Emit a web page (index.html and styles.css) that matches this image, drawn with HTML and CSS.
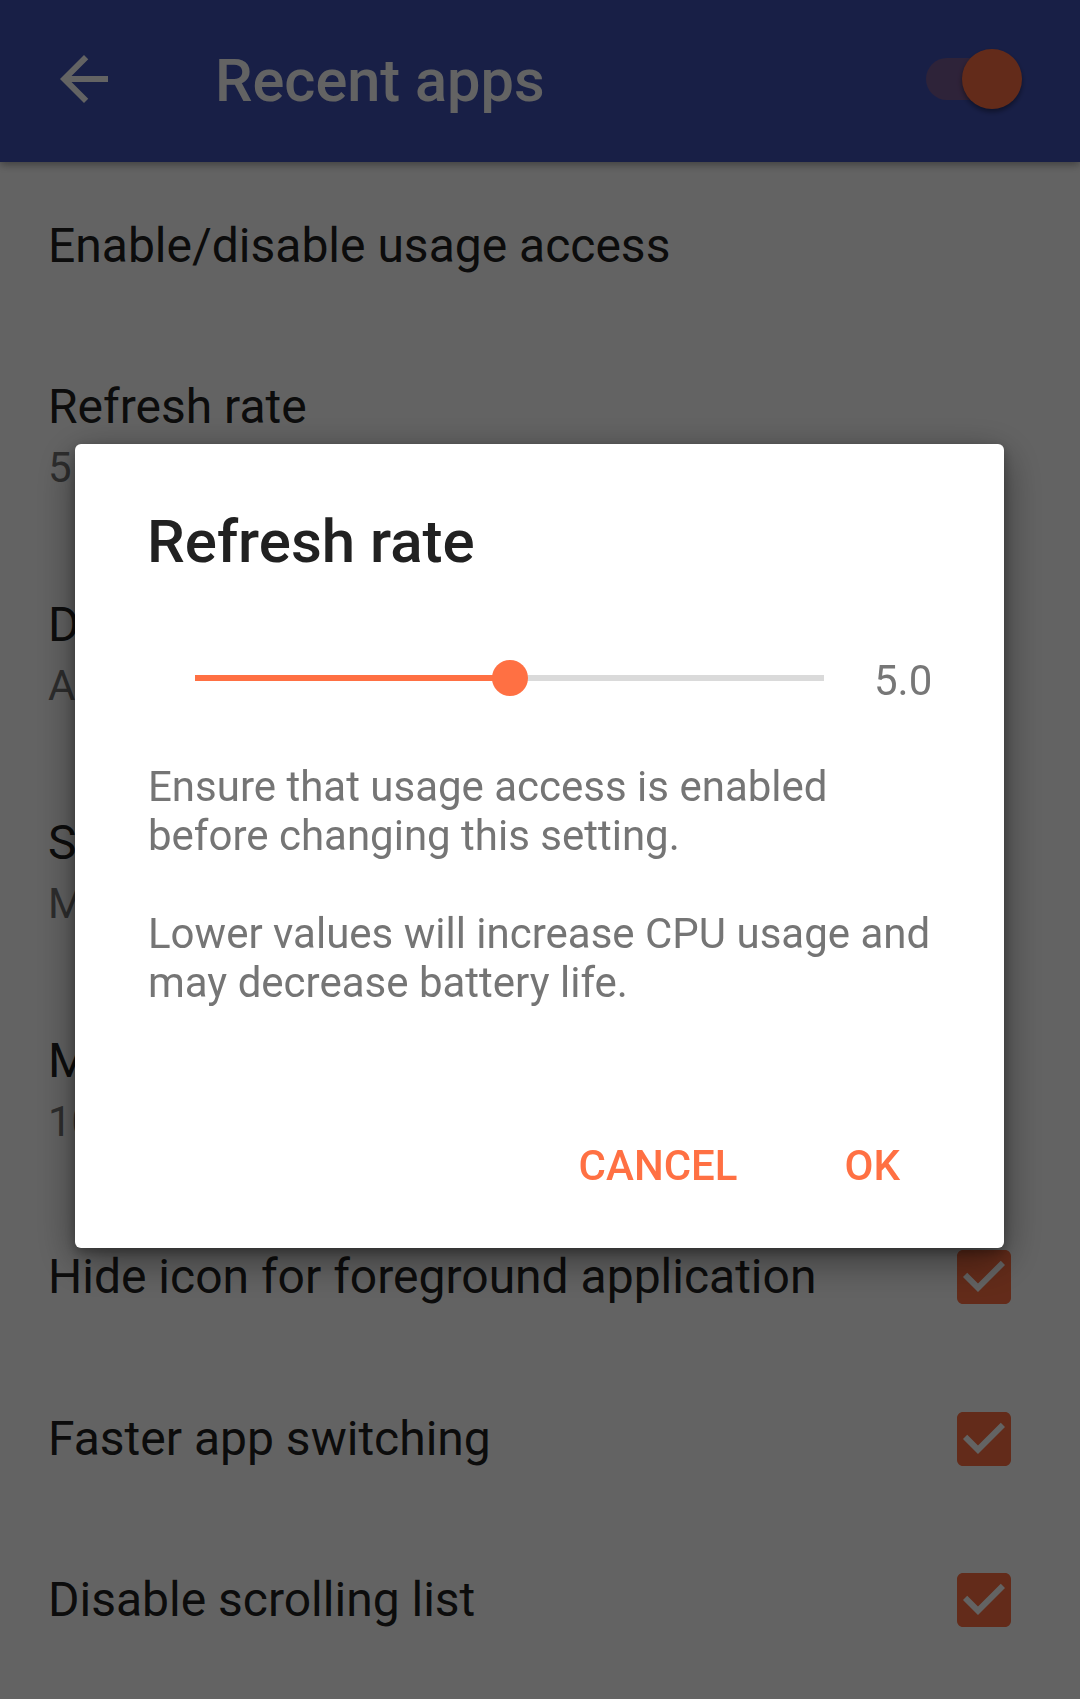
FILE: index.html
```html
<!DOCTYPE html>
<html lang="en">
<head>
<meta charset="utf-8">
<title>Recent apps</title>
<link rel="stylesheet" href="styles.css">
</head>
<body>
<div class="app">
  <header class="toolbar">
    <svg class="back" viewBox="0 0 24 24" width="72" height="72"><path d="M20 11H7.83l5.59-5.59L12 4l-8 8 8 8 1.41-1.41L7.83 13H20v-2z" fill="#ffffff"/></svg>
    <h1 class="toolbar-title">Recent apps</h1>
    <div class="switch"><span class="switch-track"></span><span class="switch-thumb"></span></div>
  </header>
  <ul class="prefs">
    <li class="pref single first"><div class="pref-text"><div class="pref-title">Enable/disable usage access</div></div></li>
    <li class="pref double"><div class="pref-text"><div class="pref-title">Refresh rate</div><div class="pref-summary">5 seconds</div></div></li>
    <li class="pref double"><div class="pref-text"><div class="pref-title">Duration</div><div class="pref-summary">App start time</div></div></li>
    <li class="pref double"><div class="pref-text"><div class="pref-title">Sort order</div><div class="pref-summary">Most recently used</div></div></li>
    <li class="pref double"><div class="pref-text"><div class="pref-title">Max number of apps</div><div class="pref-summary">10</div></div></li>
    <li class="pref single"><div class="pref-text"><div class="pref-title">Hide icon for foreground application</div></div>
      <svg class="check" viewBox="0 0 24 24" width="72" height="72"><path fill-rule="evenodd" d="M19 3H5c-1.11 0-2 .9-2 2v14c0 1.1.89 2 2 2h14c1.11 0 2-.9 2-2V5c0-1.1-.89-2-2-2zm-9 14l-5-5 1.41-1.41L10 14.17l7.59-7.59L19 8l-9 9z" fill="#ff7043"/></svg></li>
    <li class="pref single"><div class="pref-text"><div class="pref-title">Faster app switching</div></div>
      <svg class="check" viewBox="0 0 24 24" width="72" height="72"><path fill-rule="evenodd" d="M19 3H5c-1.11 0-2 .9-2 2v14c0 1.1.89 2 2 2h14c1.11 0 2-.9 2-2V5c0-1.1-.89-2-2-2zm-9 14l-5-5 1.41-1.41L10 14.17l7.59-7.59L19 8l-9 9z" fill="#ff7043"/></svg></li>
    <li class="pref single"><div class="pref-text"><div class="pref-title">Disable scrolling list</div></div>
      <svg class="check" viewBox="0 0 24 24" width="72" height="72"><path fill-rule="evenodd" d="M19 3H5c-1.11 0-2 .9-2 2v14c0 1.1.89 2 2 2h14c1.11 0 2-.9 2-2V5c0-1.1-.89-2-2-2zm-9 14l-5-5 1.41-1.41L10 14.17l7.59-7.59L19 8l-9 9z" fill="#ff7043"/></svg></li>
  </ul>
</div>
<div class="scrim"></div>
<div class="dialog" role="dialog">
  <h2 class="dialog-title">Refresh rate</h2>
  <div class="slider-row">
    <div class="slider">
      <span class="slider-fill" style="width:50%"></span>
      <span class="slider-thumb" style="left:50%"></span>
    </div>
    <span class="slider-value">5.0</span>
  </div>
  <p class="dialog-msg">Ensure that usage access is enabled<br>before changing this setting.</p>
  <p class="dialog-msg second">Lower values will increase CPU usage and<br>may decrease battery life.</p>
  <div class="dialog-actions">
    <span class="btn">CANCEL</span>
    <span class="btn">OK</span>
  </div>
</div>
</body>
</html>
```
FILE: styles.css
```css
html, body {
  margin: 0;
  padding: 0;
}
body {
  width: 1080px;
  height: 1699px;
  overflow: hidden;
  background: #ffffff;
  font-family: Roboto, "Noto Sans", sans-serif;
}
.app {
  width: 1080px;
  height: 1699px;
  background: #ffffff;
}
.toolbar {
  height: 162px;
  background: #3f51b5;
  display: flex;
  align-items: center;
  padding-left: 48px;
  box-sizing: border-box;
  box-shadow: 0 3px 8px rgba(0,0,0,0.35);
  position: relative;
  z-index: 1;
}
.back {
  flex: none;
  margin-bottom: 4px;
}
.toolbar-title {
  margin: 0 0 0 95px;
  font-size: 59.5px;
  line-height: 70px;
  font-weight: 500;
  color: #ffffff;
}
.switch {
  position: relative;
  margin-left: auto;
  margin-right: 58px;
  margin-bottom: 4px;
  width: 96px;
  height: 60px;
}
.switch-track {
  position: absolute;
  left: 0;
  top: 9px;
  width: 86px;
  height: 42px;
  border-radius: 21px;
  background: #785a93;
}
.switch-thumb {
  position: absolute;
  right: 0;
  top: 0;
  width: 60px;
  height: 60px;
  border-radius: 50%;
  background: #ff7043;
  box-shadow: 0 3px 5px rgba(0,0,0,0.4);
}
.prefs {
  list-style: none;
  margin: 0;
  padding: 1px 0 0 0;
}
.pref {
  display: flex;
  align-items: center;
  padding: 0 60px 0 48px;
  box-sizing: border-box;
}
.pref.single { height: 161.5px; }
.pref.single.first { padding-top: 5px; }
.pref.double { height: 218px; padding-top: 4px; }
.pref-text { flex: 1; }
.pref-title {
  font-size: 48px;
  line-height: 60px;
  color: #212121;
}
.pref-summary {
  margin-top: 5px;
  font-size: 42px;
  line-height: 52px;
  color: #757575;
}
.check { flex: none; }
.scrim {
  position: fixed;
  left: 0;
  top: 0;
  width: 1080px;
  height: 1699px;
  background: rgba(0,0,0,0.61);
  z-index: 2;
}
.dialog {
  position: fixed;
  left: 75px;
  top: 444px;
  width: 929px;
  height: 804px;
  box-sizing: border-box;
  padding: 63px 0 0 72px;
  background: #ffffff;
  border-radius: 6px;
  box-shadow: 0 12px 40px rgba(0,0,0,0.45), 0 4px 12px rgba(0,0,0,0.3);
  z-index: 3;
}
.dialog-title {
  margin: 0;
  font-size: 60px;
  line-height: 70px;
  font-weight: 500;
  color: #212121;
}
.slider-row {
  margin-top: 76px;
  height: 50px;
  display: flex;
  align-items: center;
  padding-left: 48px;
}
.slider {
  position: relative;
  width: 629px;
  height: 6px;
  background: #dadada;
  flex: none;
}
.slider-fill {
  position: absolute;
  left: 0;
  top: 0;
  height: 6px;
  background: #ff7043;
}
.slider-thumb {
  position: absolute;
  top: 50%;
  width: 36px;
  height: 36px;
  margin: -18px 0 0 -18px;
  border-radius: 50%;
  background: #ff7043;
}
.slider-value {
  margin-left: 50px;
  padding-top: 6px;
  font-size: 42px;
  line-height: 50px;
  color: #777777;
}
.dialog-msg {
  margin: 59px 0 0 1px;
  font-size: 42px;
  line-height: 49px;
  color: #757575;
}
.dialog-msg.second {
  margin-top: 49px;
}
.dialog-actions {
  margin-top: 134px;
  display: flex;
  justify-content: flex-end;
  gap: 107px;
  padding-right: 104px;
}
.btn {
  font-size: 42px;
  line-height: 50px;
  font-weight: 500;
  color: #ff7043;
}
```
